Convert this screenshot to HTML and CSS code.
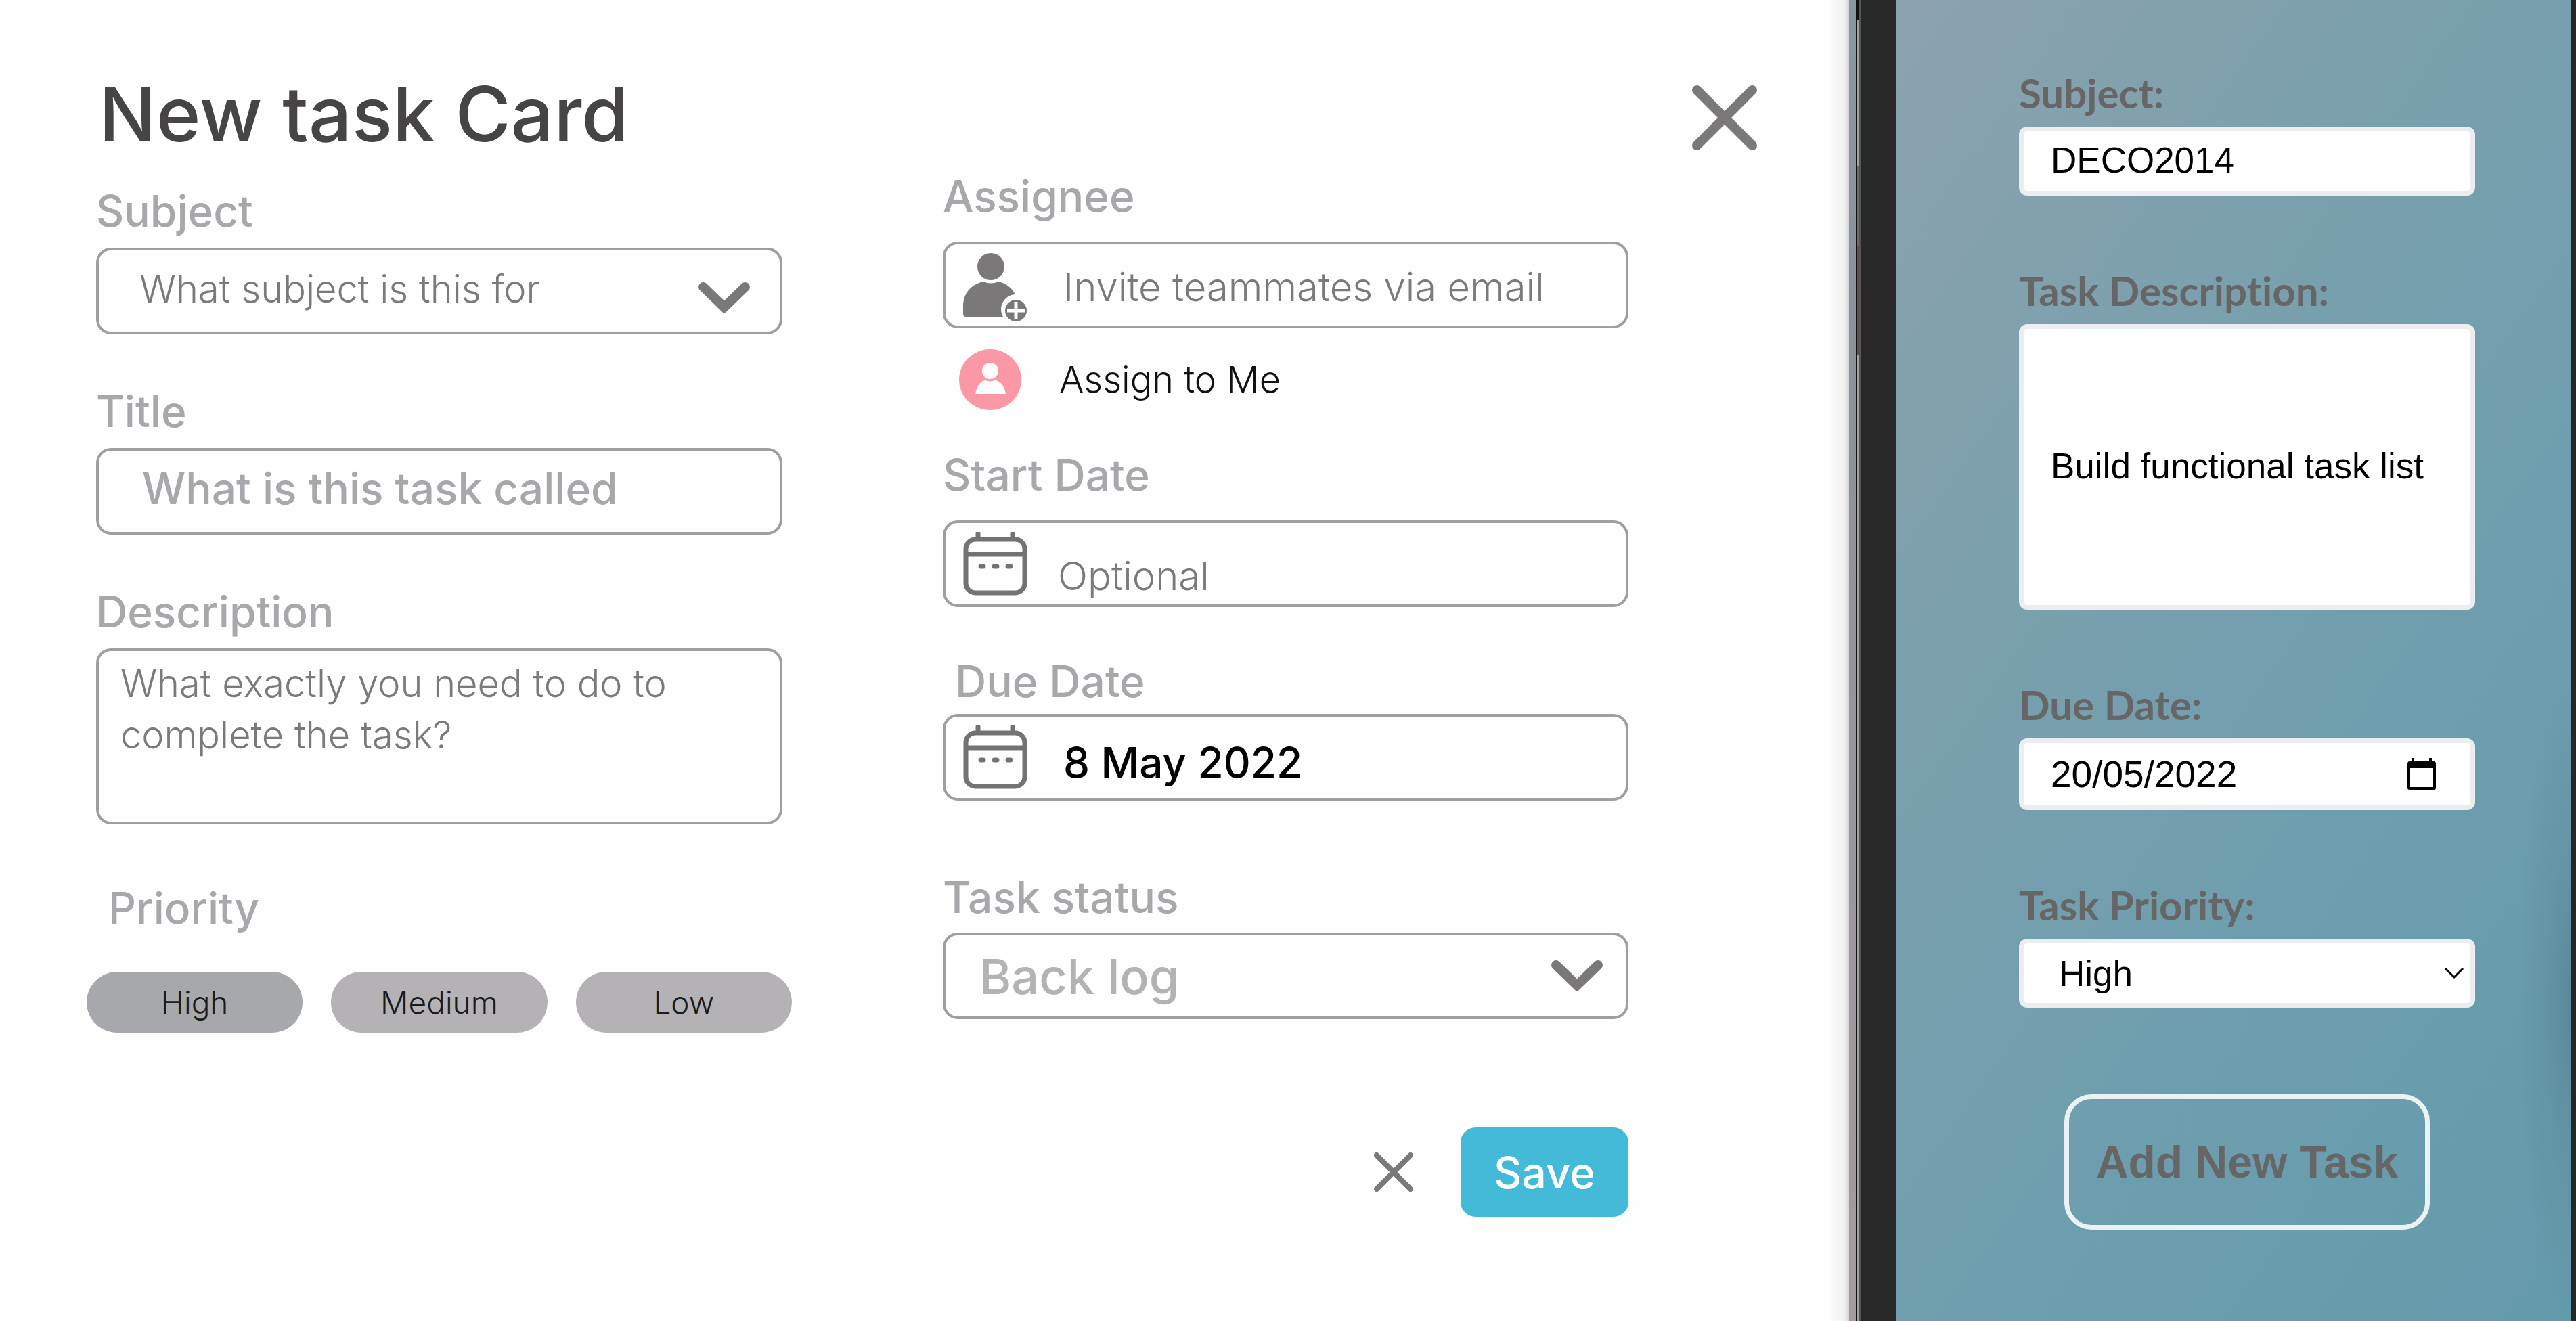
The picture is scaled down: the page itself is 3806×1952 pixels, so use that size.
FILE: index.html
```html
<!DOCTYPE html>
<html lang="en">
<head>
<meta charset="utf-8">
<title>New task Card</title>
<link rel="stylesheet" href="styles.css">
</head>
<body>
<div class="page">
  <form class="card">
    <div class="column column-main">
      <h1 class="card-title">New task Card</h1>
      <div class="field">
        <label class="label" for="subject">Subject</label>
        <div class="control">
          <select class="box box-select light" id="subject"><option>What subject is this for</option></select>
          <svg class="chevron" viewBox="0 0 76 46" aria-hidden="true"><path d="M7 7 38 37 69 7"/></svg>
        </div>
      </div>
      <div class="field">
        <label class="label" for="title">Title</label>
        <input class="box box-title" id="title" type="text" placeholder="What is this task called">
      </div>
      <div class="field">
        <label class="label" for="description">Description</label>
        <textarea class="box box-area light" id="description" placeholder="What exactly you need to do to complete the task?"></textarea>
      </div>
      <div class="field priority" role="group" aria-labelledby="priority-label">
        <span class="label label-inset" id="priority-label">Priority</span>
        <div class="pills">
          <button class="pill pill-active" type="button">High</button>
          <button class="pill" type="button">Medium</button>
          <button class="pill" type="button">Low</button>
        </div>
      </div>
    </div>

    <div class="column column-side">
      <div class="field field-roomy">
        <label class="label" for="assignee">Assignee</label>
        <div class="control">
          <input class="box box-icon light" id="assignee" type="email" placeholder="Invite teammates via email">
          <svg class="lead-icon person" viewBox="0 0 96 104" aria-hidden="true">
            <circle cx="41" cy="21" r="20" fill="#7b7879"/>
            <path d="M0 91V80C0 60 12 47 30 43Q41 48 52 43C64 46 72 52 77 62A22 22 0 0 0 59 95H4Q0 95 0 91Z" fill="#7b7879"/>
            <circle cx="78" cy="86" r="16" fill="#7b7879"/>
            <path d="M78 73V99M65 86H91" stroke="#fff" stroke-width="5"/>
          </svg>
        </div>
        <button class="assign-me" type="button">
          <svg class="avatar" viewBox="0 0 92 90" aria-hidden="true">
            <ellipse cx="46" cy="45" rx="46" ry="45" fill="#fb98a5"/>
            <circle cx="46" cy="32" r="12" fill="#fff"/>
            <path d="M24 66C26 53 33 46 40 46Q46 49 52 46C60 46 67 53 69 66Z" fill="#fff"/>
          </svg>
          <span>Assign to Me</span>
        </button>
      </div>
      <div class="field field-roomy field-start">
        <label class="label" for="start">Start Date</label>
        <div class="control">
          <input class="box box-icon box-low light" id="start" type="text" placeholder="Optional">
          <svg class="lead-icon calendar" viewBox="0 0 94 94" aria-hidden="true">
            <rect x="3" y="11" width="87" height="79" rx="14"/><path d="M4 33H89M21 2V10M72 2V10"/><path class="dots" d="M25 51H29M45 51H49M65 51H69"/>
          </svg>
        </div>
      </div>
      <div class="field field-due">
        <label class="label label-inset" for="due">Due Date</label>
        <div class="control">
          <input class="box box-icon box-due" id="due" type="text" value="8 May 2022">
          <svg class="lead-icon calendar" viewBox="0 0 94 94" aria-hidden="true">
            <rect x="3" y="11" width="87" height="79" rx="14"/><path d="M4 33H89M21 2V10M72 2V10"/><path class="dots" d="M25 51H29M45 51H49M65 51H69"/>
          </svg>
        </div>
      </div>
      <div class="field field-status">
        <label class="label" for="status">Task status</label>
        <div class="control">
          <select class="box box-select box-status" id="status"><option>Back log</option></select>
          <svg class="chevron chevron-status" viewBox="0 0 76 46" aria-hidden="true"><path d="M7 7 38 37 69 7"/></svg>
        </div>
      </div>
      <div class="actions">
        <button class="icon-button" type="button" aria-label="Cancel">
          <svg class="cross-small" viewBox="0 0 58 58" aria-hidden="true"><path d="M4 4 54 54M54 4 4 54"/></svg>
        </button>
        <button class="save" type="submit">Save</button>
      </div>
    </div>

    <button class="icon-button close" type="button" aria-label="Close">
      <svg class="cross" viewBox="0 0 96 96" aria-hidden="true"><path d="M7 7 89 89M89 7 7 89"/></svg>
    </button>
  </form>

  <div class="device">
    <div class="edge"></div>
    <div class="rail"></div>
    <form class="screen">
      <div class="entry">
        <label class="entry-label" for="m-subject">Subject:</label>
        <input class="entry-box" id="m-subject" type="text" value="DECO2014">
      </div>
      <div class="entry">
        <label class="entry-label" for="m-description">Task Description:</label>
        <input class="entry-box entry-tall" id="m-description" type="text" value="Build functional task list">
      </div>
      <div class="entry">
        <label class="entry-label" for="m-due">Due Date:</label>
        <div class="control">
          <input class="entry-box entry-date" id="m-due" type="text" value="20/05/2022">
          <svg class="date-icon" viewBox="0 0 44 48" aria-hidden="true"><path d="M7 0H11V5H33V0H37V5H40Q43 5 43 9V44Q43 47 40 47H4Q1 47 1 44V9Q1 5 4 5H7ZM5 15V43H39V15Z" fill-rule="evenodd"/></svg>
        </div>
      </div>
      <div class="entry">
        <label class="entry-label" for="m-priority">Task Priority:</label>
        <div class="control">
          <select class="entry-box entry-select" id="m-priority"><option>High</option></select>
          <svg class="entry-chevron" viewBox="0 0 30 18" aria-hidden="true"><path d="M2 2 15 15 28 2"/></svg>
        </div>
      </div>
      <button class="add" type="submit">Add New Task</button>
    </form>
  </div>
</div>
</body>
</html>
```

FILE: styles.css
```css
* { box-sizing: border-box; }

body {
  margin: 0;
  background: #fefefe;
  font-family: Inter, "Open Sans", sans-serif;
}

button, input, select, textarea {
  margin: 0;
  font: inherit;
  color: inherit;
}

button { cursor: pointer; }

.page {
  display: grid;
  grid-template-columns: minmax(0, 2700fr) minmax(0, 1106fr);
  min-height: 100vh;
}

/* Task card */

.card {
  display: grid;
  grid-template-columns: minmax(0, 1fr) minmax(0, 1fr) 96px;
  align-items: start;
  padding: 108px 104px 104px 142px;
}

.column-main { margin-right: 165px; }

.column-side {
  margin-right: 94px;
  margin-left: 72px;
  padding-top: 146px;
}

.card-title {
  margin: 0 0 48px 4px;
  font-size: 112px;
  font-weight: 500;
  line-height: 120px;
  color: #474446;
}

.field {
  display: flex;
  flex-direction: column;
  gap: 18px;
  margin-bottom: 78px;
}

.label {
  font-size: 64px;
  font-weight: 500;
  line-height: 72px;
  color: #a7a8ab;
}

.label-inset { padding-left: 18px; }

.control {
  display: grid;
  align-items: center;
}

.control > * { grid-area: 1 / 1; }

.box {
  display: block;
  width: 100%;
  height: 128px;
  padding: 0 60px 6px;
  border: 4px solid #9f9fa1;
  border-radius: 22px;
  background: #fefefe;
  outline: 0;
  font-size: 56px;
  font-weight: 500;
  color: #a7a8ab;
}

.box::placeholder {
  color: inherit;
  opacity: 1;
}

.light {
  font-weight: 300;
  color: #7b797b;
}

.box-select { appearance: none; }

.box-title { padding: 0 64px 10px; font-size: 64px; }

.box-area {
  height: 260px;
  padding: 10px 32px;
  line-height: 76px;
  resize: none;
}

.box-icon {
  padding: 6px 0 0 174px;
  font-size: 58px;
}

.box-low {
  padding-top: 36px;
  padding-left: 166px;
}

.box-due {
  padding-top: 14px;
  font-size: 62px;
  color: #000;
}

.box-status {
  padding: 0 50px;
  font-size: 72px;
  color: #b3b2b4;
}

.chevron {
  justify-self: end;
  width: 76px;
  height: 46px;
  margin: 20px 48px 0 0;
  fill: none;
  stroke: #7b7879;
  stroke-width: 14;
  stroke-linecap: round;
  pointer-events: none;
}

.chevron-status { margin: 0 38px 0 0; }

.lead-icon {
  width: 96px;
  height: 104px;
  margin-left: 30px;
  pointer-events: none;
}

.person { margin-top: 8px; }

.calendar {
  height: 94px;
  fill: none;
  stroke: #757274;
  stroke-width: 7;
  stroke-linecap: round;
}

.priority { gap: 58px; padding-top: 10px; }

.pills {
  display: grid;
  grid-template-columns: repeat(3, 1fr);
  gap: 42px;
  margin: 0 -14px;
}

.pill {
  height: 90px;
  border: 0;
  border-radius: 45px;
  background: #b4b2b4;
  font-size: 46px;
  font-weight: 300;
  color: #1c1c1e;
}

.pill-active { background: #a6a8ac; }

.field-roomy { gap: 31px; }

.assign-me {
  display: flex;
  align-items: center;
  gap: 56px;
  padding: 0 0 0 24px;
  border: 0;
  background: none;
  font-size: 54px;
  font-weight: 300;
  line-height: 90px;
  color: #111;
}

.avatar { width: 92px; height: 90px; }

.field-roomy:first-child { margin-bottom: 60px; }

.field-start { margin-bottom: 74px; }

.field-due {
  gap: 12px;
  margin-bottom: 107px;
}

.field-status {
  gap: 16px;
  margin-bottom: 160px;
}

.actions {
  display: flex;
  justify-content: flex-end;
  align-items: center;
  gap: 70px;
}

.icon-button {
  display: block;
  padding: 0;
  border: 0;
  background: none;
}

.icon-button svg {
  display: block;
  stroke: #7b7879;
  stroke-linecap: round;
}

.cross { width: 96px; height: 96px; stroke-width: 14; }

.cross-small { width: 58px; height: 58px; stroke-width: 8; }

.close { margin-top: 18px; }

.save {
  width: 248px;
  height: 132px;
  border: 0;
  border-radius: 22px;
  background: #43bad8;
  font-size: 64px;
  font-weight: 500;
  color: #fff;
}

/* Device preview */

.device {
  display: flex;
  border-right: 7px solid #262626;
}

.edge {
  flex: 0 0 42px;
  background:
    linear-gradient(#859a9e, #8e9199 30%, #a49b9e) right / 10px 100% no-repeat,
    linear-gradient(to right, #fefefe, #f0f0f1 60%, #d4d4d6 76%);
}

.rail {
  flex: 0 0 8px;
  border: solid #111;
  border-width: 0 1px;
  box-shadow: inset -2px 0 #555;
  background: linear-gradient(#111 29px, #a3a3a3 29px 245px, #6a6a6c 245px 363px, #654c4f 363px 525px, #a3a3a3 525px);
}

.screen {
  flex: 1;
  min-width: 0;
  padding: 101px 142px 100px 182px;
  border-left: 51px solid #282828;
  background:
    radial-gradient(ellipse 80px 480px at 100% 1480px, rgb(40 70 80 / 22%), rgb(40 70 80 / 8%) 50%, transparent),
    linear-gradient(125deg, #8ba3ad, #789fad 40%, #6d9eae 65%, #649bac);
  font-family: "Liberation Sans", Arial, sans-serif;
}

.entry {
  display: flex;
  flex-direction: column;
  gap: 14px;
  margin-bottom: 104px;
}

.entry-label {
  font-family: Lato, sans-serif;
  font-size: 60px;
  font-weight: 700;
  font-variant-ligatures: none;
  line-height: 72px;
  color: #676667;
}

.entry-box {
  width: 100%;
  height: 102px;
  padding: 0 40px 4px;
  border: 7px solid #ecedf0;
  border-radius: 12px;
  background: #fff;
  outline: 0;
  font-size: 53px;
  color: #000;
}

.entry-tall { height: 422px; }

.entry-date {
  height: 106px;
  padding-bottom: 0;
  font-size: 55px;
}

.entry-select {
  padding: 0 52px;
  appearance: none;
}

.date-icon {
  justify-self: end;
  width: 44px;
  height: 48px;
  margin-right: 57px;
  pointer-events: none;
}

.entry-chevron {
  justify-self: end;
  width: 30px;
  height: 18px;
  margin-right: 16px;
  fill: none;
  stroke: #000;
  stroke-width: 3;
  pointer-events: none;
}

.add {
  display: block;
  width: 80%;
  height: 200px;
  margin: 128px auto 0;
  border: 7px solid #ecf1f5;
  border-radius: 40px;
  background: none;
  font-size: 66px;
  font-weight: 700;
  color: #676667;
}
```
